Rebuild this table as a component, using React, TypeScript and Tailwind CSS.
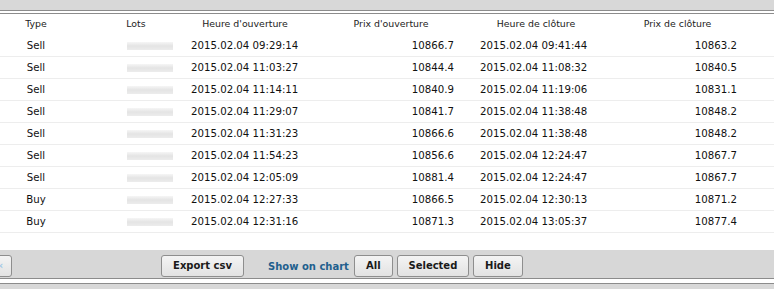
import React from "react";

interface Trade {
  type: string;
  openTime: string;
  openPrice: string;
  closeTime: string;
  closePrice: string;
}

const trades: Trade[] = [
  { type: "Sell", openTime: "2015.02.04 09:29:14", openPrice: "10866.7", closeTime: "2015.02.04 09:41:44", closePrice: "10863.2" },
  { type: "Sell", openTime: "2015.02.04 11:03:27", openPrice: "10844.4", closeTime: "2015.02.04 11:08:32", closePrice: "10840.5" },
  { type: "Sell", openTime: "2015.02.04 11:14:11", openPrice: "10840.9", closeTime: "2015.02.04 11:19:06", closePrice: "10831.1" },
  { type: "Sell", openTime: "2015.02.04 11:29:07", openPrice: "10841.7", closeTime: "2015.02.04 11:38:48", closePrice: "10848.2" },
  { type: "Sell", openTime: "2015.02.04 11:31:23", openPrice: "10866.6", closeTime: "2015.02.04 11:38:48", closePrice: "10848.2" },
  { type: "Sell", openTime: "2015.02.04 11:54:23", openPrice: "10856.6", closeTime: "2015.02.04 12:24:47", closePrice: "10867.7" },
  { type: "Sell", openTime: "2015.02.04 12:05:09", openPrice: "10881.4", closeTime: "2015.02.04 12:24:47", closePrice: "10867.7" },
  { type: "Buy", openTime: "2015.02.04 12:27:33", openPrice: "10866.5", closeTime: "2015.02.04 12:30:13", closePrice: "10871.2" },
  { type: "Buy", openTime: "2015.02.04 12:31:16", openPrice: "10871.3", closeTime: "2015.02.04 13:05:37", closePrice: "10877.4" },
];

const cols = "grid grid-cols-[72px_111px_137px_154px_136px_164px]";

const btn =
  "h-[22px] rounded-[3px] border border-[#8e8e8e] bg-gradient-to-b from-[#f4f4f4] to-[#e2e2e2] text-[10px] font-bold text-[#1a1a1a] leading-none";

const App = () => {
  return (
    <div
      className="w-[774px] h-[289px] overflow-hidden bg-white"
      style={{ fontFamily: '"DejaVu Sans", Verdana, sans-serif' }}
    >
      {/* top strip */}
      <div className="h-[10px] bg-[#d8d8d8]" />
      <div className="h-[4px] border-t border-b border-[#8c8c8c] bg-white" />

      {/* header */}
      <div className={`${cols} h-[21px] items-center text-[9.4px] text-[#222]`}>
        <div className="text-center">Type</div>
        <div className="text-center pl-[17px]">Lots</div>
        <div className="text-center pr-[13px]">Heure d'ouverture</div>
        <div className="text-center pr-[12px]">Prix d'ouverture</div>
        <div className="text-center pr-[12px]">Heure de clôture</div>
        <div className="text-center pr-[29px]">Prix de clôture</div>
      </div>

      {/* rows */}
      {trades.map((t, i) => (
        <div
          key={i}
          className={`${cols} h-[22px] items-center border-b border-[#ededed] text-[10.2px] text-[#111]`}
        >
          <div className="text-center">{t.type}</div>
          <div className="flex justify-end pr-[10px]">
            <div className="h-[8px] w-[46px] bg-gradient-to-b from-[#f6f6f6] via-[#e4e4e4] to-[#ececec]" />
          </div>
          <div className="pl-[8px]">{t.openTime}</div>
          <div className="text-right pr-[20px]">{t.openPrice}</div>
          <div className="pl-[6px]">{t.closeTime}</div>
          <div className="text-right pr-[37px]">{t.closePrice}</div>
        </div>
      ))}

      <div className="h-[17px]" />

      {/* footer toolbar */}
      <div className="h-[28px] bg-[#d7d7d7] flex items-start pt-[5px]">
        <button className={`${btn} w-[40px] -ml-[28px] text-left pl-[26px] text-[#9cc7e6]`}>
          ‹
        </button>
        <button className={`${btn} w-[83px] ml-[149px]`}>Export csv</button>
        <span className="ml-[24px] h-[22px] flex items-center text-[10px] font-bold text-[#1f5f8e]">
          Show on chart
        </span>
        <button className={`${btn} w-[39px] ml-[5px]`}>All</button>
        <button className={`${btn} w-[72px] ml-[4px]`}>Selected</button>
        <button className={`${btn} w-[50px] ml-[4px]`}>Hide</button>
      </div>
      <div className="h-[6px] border-t border-b border-[#8c8c8c] bg-white" />
      <div className="h-[10px] bg-[#d8d8d8]" />
    </div>
  );
};

export default App;
